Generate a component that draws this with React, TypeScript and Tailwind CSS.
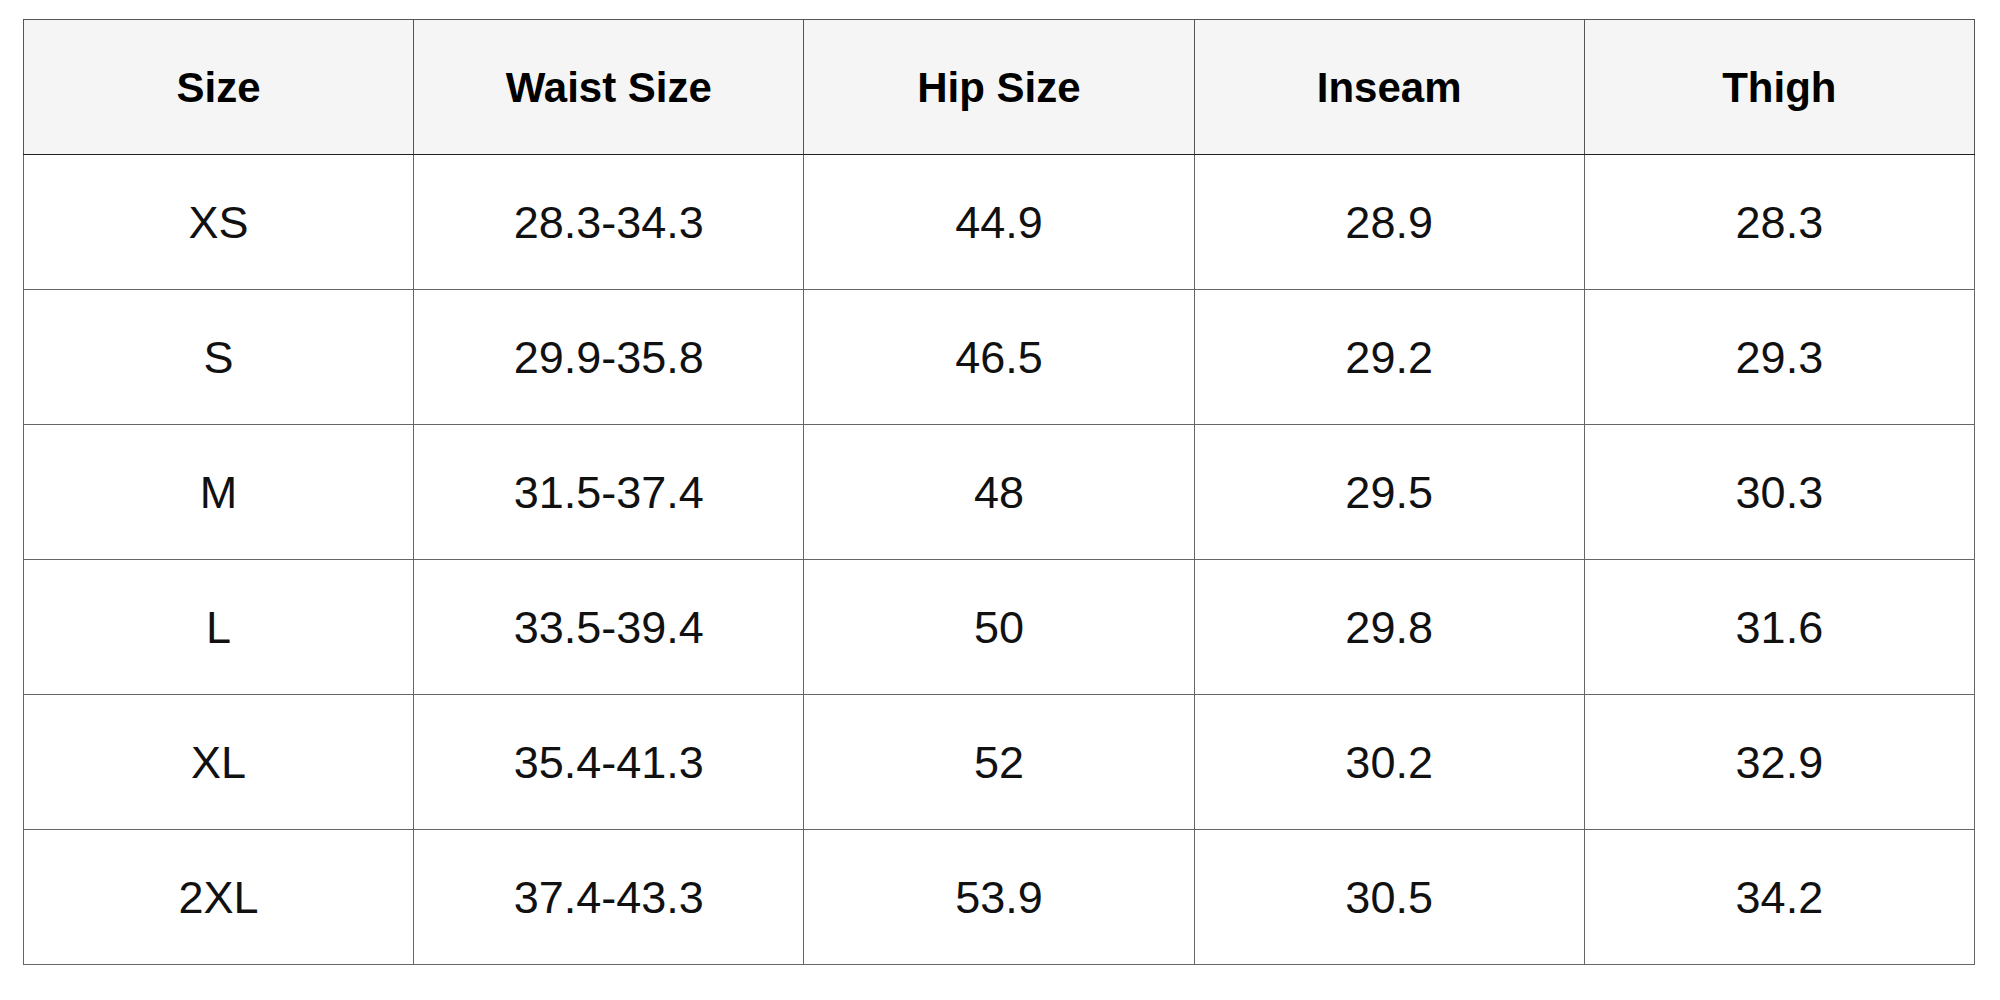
import React from "react";

const headers = ["Size", "Waist Size", "Hip Size", "Inseam", "Thigh"];
const rows = [
  ["XS", "28.3-34.3", "44.9", "28.9", "28.3"],
  ["S", "29.9-35.8", "46.5", "29.2", "29.3"],
  ["M", "31.5-37.4", "48", "29.5", "30.3"],
  ["L", "33.5-39.4", "50", "29.8", "31.6"],
  ["XL", "35.4-41.3", "52", "30.2", "32.9"],
  ["2XL", "37.4-43.3", "53.9", "30.5", "34.2"],
];

export default function App() {
  return (
    <div className="w-[2000px] h-[1000px] bg-white pl-[23px] pt-[19px]" style={{ fontFamily: '"Liberation Sans", Arial, sans-serif' }}>
      <table className="w-[1952px] border-collapse table-fixed text-black">
        <thead>
          <tr className="bg-[#f5f5f5]">
            {headers.map((h) => (
              <th key={h} className="h-[135px] border border-[#555] border-b-[#222] text-[42px] font-bold text-center align-middle p-0">
                {h}
              </th>
            ))}
          </tr>
        </thead>
        <tbody>
          {rows.map((r, i) => (
            <tr key={i}>
              {r.map((c, j) => (
                <td key={j} className="h-[135px] border border-[#666] text-[45px] text-[#111] text-center align-middle p-0 pt-[2px]">
                  {c}
                </td>
              ))}
            </tr>
          ))}
        </tbody>
      </table>
    </div>
  );
}
